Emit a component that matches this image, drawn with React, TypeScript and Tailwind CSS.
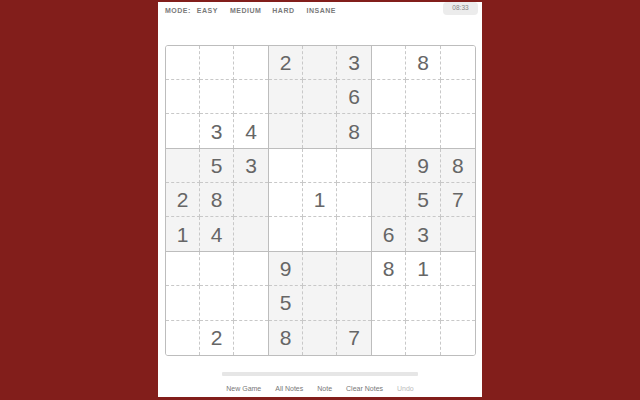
import React from "react";

const GRID: number[][] = [
  [0, 0, 0, 2, 0, 3, 0, 8, 0],
  [0, 0, 0, 0, 0, 6, 0, 0, 0],
  [0, 3, 4, 0, 0, 8, 0, 0, 0],
  [0, 5, 3, 0, 0, 0, 0, 9, 8],
  [2, 8, 0, 0, 1, 0, 0, 5, 7],
  [1, 4, 0, 0, 0, 0, 6, 3, 0],
  [0, 0, 0, 9, 0, 0, 8, 1, 0],
  [0, 0, 0, 5, 0, 0, 0, 0, 0],
  [0, 2, 0, 8, 0, 7, 0, 0, 0],
];

function Box({ br, bc }: { br: number; bc: number }) {
  const shaded = (br + bc) % 2 === 1;
  const cells = [];
  for (let r = 0; r < 3; r++) {
    for (let c = 0; c < 3; c++) {
      const v = GRID[br * 3 + r][bc * 3 + c];
      const cls = [
        "flex items-center justify-center text-[21px] text-[#666] leading-none",
        c < 2 ? "border-r border-dashed border-r-[#c8c8c8]" : "",
        r < 2 ? "border-b border-dashed border-b-[#c8c8c8]" : "",
      ].join(" ");
      cells.push(
        <div key={`${r}-${c}`} className={cls}>
          {v ? v : ""}
        </div>
      );
    }
  }
  const boxCls = [
    "grid grid-cols-3 grid-rows-3",
    shaded ? "bg-[#f4f4f4]" : "bg-white",
    bc < 2 ? "border-r border-r-[#bdbdbd]" : "",
    br < 2 ? "border-b border-b-[#bdbdbd]" : "",
  ].join(" ");
  return <div className={boxCls}>{cells}</div>;
}

export default function App() {
  const boxes = [];
  for (let br = 0; br < 3; br++) {
    for (let bc = 0; bc < 3; bc++) {
      boxes.push(<Box key={`${br}-${bc}`} br={br} bc={bc} />);
    }
  }
  return (
    <div
      className="w-[640px] h-[400px] bg-[#821e1b] pt-[2px]"
      style={{ fontFamily: '"Liberation Sans", Arial, sans-serif' }}
    >
      <div className="ml-[158px] w-[324px] h-[395px] bg-white flex flex-col">
        <div className="flex items-start justify-between h-[16px]">
          <div className="flex items-center pl-[7px] pt-[5px] text-[7px] font-bold tracking-[0.5px] text-[#7a7a7a] leading-none">
            <span>MODE:</span>
            <span className="ml-[6px]">EASY</span>
            <span className="ml-[12px]">MEDIUM</span>
            <span className="ml-[11px]">HARD</span>
            <span className="ml-[12px]">INSANE</span>
          </div>
          <div className="mr-[4px] w-[35px] h-[13px] rounded-[4px] bg-[#ececec] flex items-center justify-center text-[6.5px] text-[#858585] leading-none">
            08:33
          </div>
        </div>
        <div className="mt-[27px] ml-[7px] w-[311px] h-[311px] border border-[#bdbdbd] rounded-[3px] overflow-hidden grid grid-cols-3 grid-rows-3">
          {boxes}
        </div>
        <div className="mt-[16px] self-center w-[196px] h-[4px] bg-[#e6e6e6] rounded-[1px]" />
        <div className="mt-[9px] self-center flex items-center gap-[14px] text-[7px] text-[#777] leading-none">
          <span>New Game</span>
          <span>All Notes</span>
          <span>Note</span>
          <span>Clear Notes</span>
          <span className="text-[#bbb]">Undo</span>
        </div>
      </div>
    </div>
  );
}
